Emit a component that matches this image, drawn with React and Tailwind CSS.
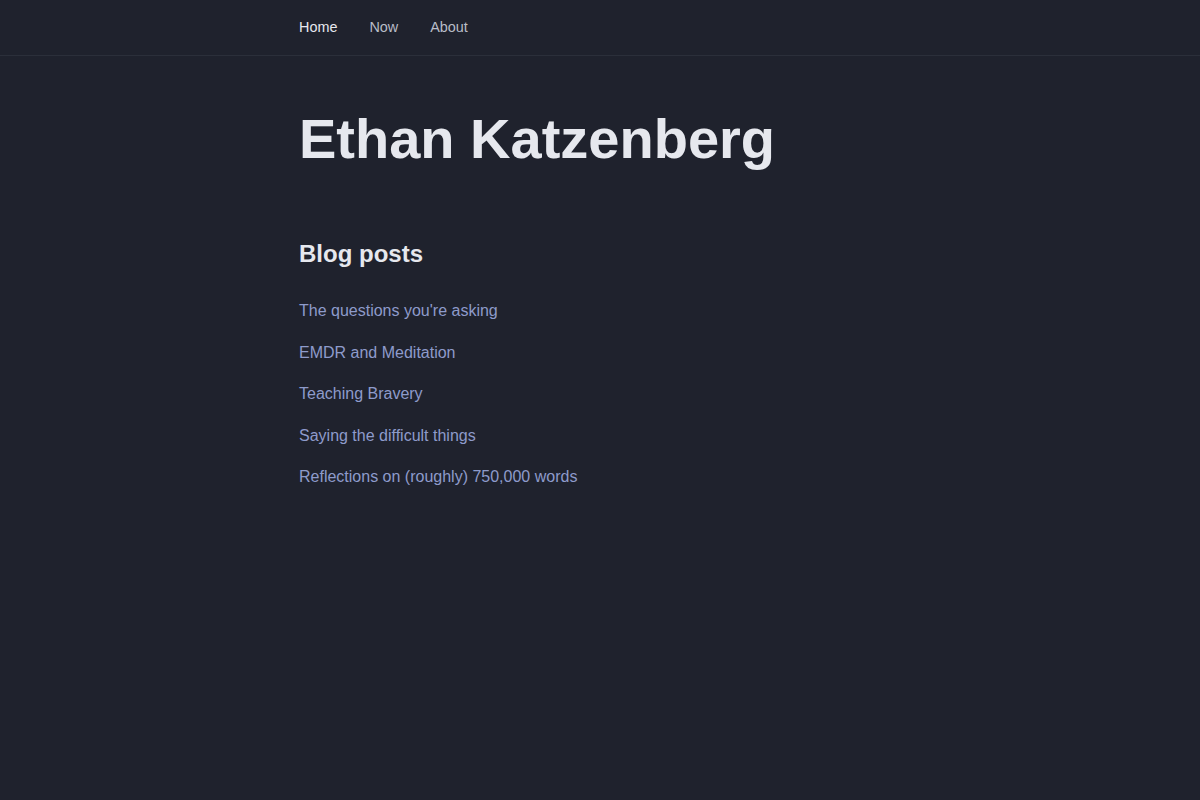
export default function App() {
  const posts = [
    "The questions you're asking",
    "EMDR and Meditation",
    "Teaching Bravery",
    "Saying the difficult things",
    "Reflections on (roughly) 750,000 words",
  ];
  return (
    <div className="min-h-screen bg-[#1f222d] font-['Liberation_Sans',Arial,sans-serif]">
      <nav className="h-[56px] border-b border-[#2b2f3a]">
        <div className="mx-auto flex h-full max-w-[602px] items-center gap-[32px] text-[14.4px]">
          <a className="text-[#e6e8ee]">Home</a>
          <a className="text-[#b9bdc8]">Now</a>
          <a className="text-[#b9bdc8]">About</a>
        </div>
      </nav>
      <main className="mx-auto max-w-[602px]">
        <h1 className="pt-[49px] text-[56px] font-bold leading-[1.2] text-[#e6e8ee]">
          Ethan Katzenberg
        </h1>
        <h2 className="mt-[68px] text-[24px] font-bold leading-[1.2] text-[#e6e8ee]">
          Blog posts
        </h2>
        <ul className="mt-[29px] flex flex-col gap-[16px]">
          {posts.map((p) => (
            <li key={p} className="text-[16px] leading-[1.6] text-[#8e9bcb]">
              <a>{p}</a>
            </li>
          ))}
        </ul>
      </main>
    </div>
  );
}
